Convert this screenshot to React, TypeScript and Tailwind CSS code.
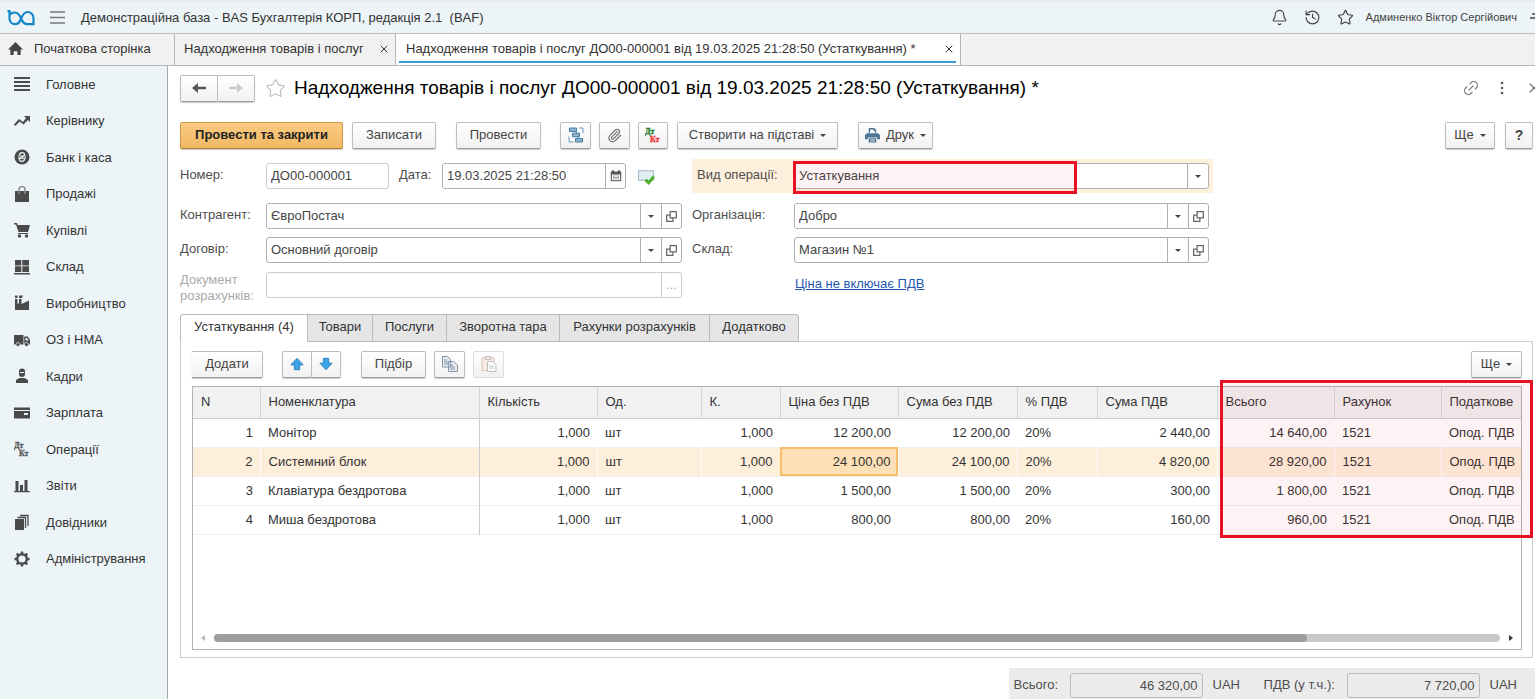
import type { ReactNode } from "react";

import clsx from "clsx";
import { Bell, History, Link2, Paperclip, Star, X } from "lucide-react";

type IconProps = { children: ReactNode; className?: string };

const Glyph = ({ children, className = "size-4" }: IconProps) => (
  <svg
    viewBox="0 0 16 16"
    fill="currentColor"
    className={clsx("shrink-0", className)}
    aria-hidden="true"
  >
    {children}
  </svg>
);

const DebitCredit = ({ debit, credit }: { debit: string; credit: string }) => (
  <Glyph className="size-4 font-['Liberation_Serif',serif] text-[8px] font-bold">
    <text x="0" y="7" fill={debit} stroke={debit} strokeWidth=".3">
      Дт
    </text>
    <text x="5" y="15" fill={credit} stroke={credit} strokeWidth=".3">
      Кт
    </text>
  </Glyph>
);

const SECTIONS = [
  {
    title: "Головне",
    icon: (
      <Glyph>
        <path d="M0 1h16v2H0zM0 5h16v2H0zM0 9h16v2H0zM0 13h16v2H0z" />
      </Glyph>
    ),
  },
  {
    title: "Керівнику",
    icon: (
      <Glyph>
        <path d="M10 3h6v6l-2-2-4.500 4.500-4-3L1.500 13 0 11.500l5-5.500 4 3 3-4z" />
      </Glyph>
    ),
  },
  {
    title: "Банк і каса",
    icon: (
      <Glyph>
        <circle cx="8" cy="8" r="7.500" />
        <path
          d="M5.500 6C5.500 3 10.500 3 10.500 5.500c0 2.500-5 2-5 5 0 2.500 5 2.500 5-.500M4 7h8M4 9.200h8"
          fill="none"
          stroke="#edf4f7"
          strokeWidth="1.200"
        />
      </Glyph>
    ),
  },
  {
    title: "Продажі",
    icon: (
      <Glyph>
        <path d="M1 5h14v11H1z" />
        <path
          d="M5 8V3.500a3 3 0 0 1 6 0V8"
          fill="none"
          stroke="#8a8d8f"
          strokeWidth="1.500"
        />
      </Glyph>
    ),
  },
  {
    title: "Купівлі",
    icon: (
      <Glyph>
        <path d="M0 1h3l.6 2H16l-2 7H4.500L2 2.500H0zM4 11h10v1H4z" />
        <circle cx="5.500" cy="14" r="1.700" />
        <circle cx="12.500" cy="14" r="1.700" />
      </Glyph>
    ),
  },
  {
    title: "Склад",
    icon: (
      <Glyph>
        <path d="M1 1h6.300v5.500H1zM8.300 1H15v5.500H8.300zM1 7.300h6.300V13H1zM8.300 7.300H15V13H8.300zM0 14h16v1.500H0z" />
      </Glyph>
    ),
  },
  {
    title: "Виробництво",
    icon: (
      <Glyph>
        <path d="M1 .5h2.500V3H1zM5 .5h4L8 3H5zM1 4h2.500v5L5 8V4h2.500v5L15 5.500V15H1z" />
      </Glyph>
    ),
  },
  {
    title: "ОЗ і НМА",
    icon: (
      <Glyph>
        <path d="M0 3h9.500v9.500H0zM10.200 4.500h3.500L16 8v4.500h-5.800zM11.500 6v2.500h3.300L13 6z" fillRule="evenodd" />
        <circle cx="4" cy="12.500" r="2" stroke="#edf4f7" strokeWidth=".7" />
        <circle cx="12.500" cy="12.500" r="2" stroke="#edf4f7" strokeWidth=".7" />
      </Glyph>
    ),
  },
  {
    title: "Кадри",
    icon: (
      <Glyph>
        <path d="M5 3.500a3 3 0 0 1 6 0V6a3 3 0 0 1-6 0zM2 15v-3l3.500-2h5l3.500 2v3z" />
        <path d="M5.800 4.500h4.400" stroke="#edf4f7" />
      </Glyph>
    ),
  },
  {
    title: "Зарплата",
    icon: (
      <Glyph>
        <path d="M0 2.500h16V5H0zM0 6h16v7.500H0zm10 2v2h4V8z" fillRule="evenodd" />
      </Glyph>
    ),
  },
  { title: "Операції", icon: <DebitCredit debit="#555" credit="#555" /> },
  {
    title: "Звіти",
    icon: (
      <Glyph>
        <path d="M1.500 3h3v10h-3zM6 7h3v6H6zM10.500 2h3v11h-3zM0 13h16v1.200H0z" />
      </Glyph>
    ),
  },
  {
    title: "Довідники",
    icon: (
      <Glyph>
        <path d="M1 5h9v11H1z" />
        <path
          d="M3.500 3.500h8V14M6 1.500h8V12"
          fill="none"
          stroke="currentColor"
          strokeWidth="1.300"
        />
      </Glyph>
    ),
  },
  {
    title: "Адміністрування",
    icon: (
      <Glyph>
        <circle
          cx="8"
          cy="8"
          r="4.800"
          fill="none"
          stroke="currentColor"
          strokeWidth="2.400"
        />
        <path
          d="M8 .5v3M8 12.500v3M.5 8h3M12.500 8h3M2.700 2.700l2 2M11.300 11.300l2 2M13.300 2.700l-2 2M4.700 11.300l-2 2"
          stroke="currentColor"
          strokeWidth="2.400"
        />
      </Glyph>
    ),
  },
];

const FORM_TABS = [
  { title: "Устаткування (4)", width: "w-[128px]" },
  { title: "Товари", width: "w-[65px]" },
  { title: "Послуги", width: "w-[74px]" },
  { title: "Зворотна тара", width: "w-[113px]" },
  { title: "Рахунки розрахунків", width: "w-[150px]" },
  { title: "Додатково", width: "w-[89px]" },
];

const COLUMNS = [
  { title: "N", width: "w-[67px]", numeric: true },
  { title: "Номенклатура", width: "" },
  { title: "Кількість", width: "w-[118px]", numeric: true },
  { title: "Од.", width: "w-[104px]" },
  { title: "К.", width: "w-[79px]", numeric: true },
  { title: "Ціна без ПДВ", width: "w-[118px]", numeric: true },
  { title: "Сума без ПДВ", width: "w-[119px]", numeric: true },
  { title: "% ПДВ", width: "w-[80px]" },
  { title: "Сума ПДВ", width: "w-[120px]", numeric: true },
  { title: "Всього", width: "w-[117px]", numeric: true },
  { title: "Рахунок", width: "w-[107px]" },
  { title: "Податкове", width: "w-[80px]" },
];

const ROWS = [
  ["1", "Монітор", "1,000", "шт", "1,000", "12 200,00", "12 200,00", "20%", "2 440,00", "14 640,00", "1521", "Опод. ПДВ"],
  ["2", "Системний блок", "1,000", "шт", "1,000", "24 100,00", "24 100,00", "20%", "4 820,00", "28 920,00", "1521", "Опод. ПДВ"],
  ["3", "Клавіатура бездротова", "1,000", "шт", "1,000", "1 500,00", "1 500,00", "20%", "300,00", "1 800,00", "1521", "Опод. ПДВ"],
  ["4", "Миша бездротова", "1,000", "шт", "1,000", "800,00", "800,00", "20%", "160,00", "960,00", "1521", "Опод. ПДВ"],
];

const SELECTED_ROW = 1;
const SELECTED_CELL = 5;

const Caret = () => (
  <span className="border-x-[3px] border-t-[3px] border-x-transparent border-t-[#444]" />
);

type ToolButtonProps = {
  children: ReactNode;
  className?: string;
  label?: string;
  disabled?: boolean;
  primary?: boolean;
};

const ToolButton = ({
  children,
  className,
  label,
  disabled,
  primary,
}: ToolButtonProps) => (
  <button
    aria-label={label}
    disabled={disabled}
    className={clsx(
      "flex h-[27px] shrink-0 items-center justify-center rounded-xs border bg-linear-to-b pb-px shadow-[0_1px_1px_#ccc] disabled:border-[#ddd] disabled:shadow-none",
      primary
        ? "border-[#c99a4c] border-b-[#a87c34] from-[#fbcb80] to-[#f1b863] font-bold text-[#222]"
        : "border-[#bdbdbd] border-b-[#9d9d9d] from-white to-[#f1f1f1]",
      className,
    )}
  >
    {children}
  </button>
);

const OpenIcon = () => (
  <Glyph className="size-[11px]">
    <path
      d="M6 1h9v9H6zM5 6H1v9h9v-4"
      fill="none"
      stroke="currentColor"
      strokeWidth="1.800"
    />
  </Glyph>
);

type ComboProps = { id: string; value: string; openable?: boolean };

const Combo = ({ id, value, openable = true }: ComboProps) => (
  <div className="flex h-[26px] flex-1 rounded-[3px] border border-[#b0b0b0] bg-white">
    <div className="relative flex flex-1">
      <select
        id={id}
        className="w-full appearance-none pr-6 pb-px pl-1 text-[#444] outline-none"
      >
        <option>{value}</option>
      </select>
      <span className="pointer-events-none absolute inset-y-0 right-0 flex w-[21px] items-center justify-center border-l border-[#b0b0b0]">
        <Caret />
      </span>
    </div>
    {openable && (
      <button
        type="button"
        aria-label="Відкрити"
        className="flex w-5 items-center justify-center border-l border-[#b0b0b0] text-[#666]"
      >
        <OpenIcon />
      </button>
    )}
  </div>
);

const TopBar = () => (
  <header className="flex h-[34px] shrink-0 items-center border-t-2 border-b border-t-[#ececec] border-b-[#b9bdbf] bg-[#edf4f7] pl-[7px]">
    <svg viewBox="0 0 28 16" className="h-4 w-7" fill="none" stroke="#1487c9" strokeWidth="2.200">
      <path d="M.5 1.200h2v7c0 3.600 2.400 6 5.600 6 3 0 4.600-2 5.900-5.200C15.500 5 17 2 20.500 2c3.400 0 6 2.600 6 6v6.200h-6c-3.500 0-5-2-6.500-5.700C12.600 4.500 11 2.500 7.500 2.500c-2 0-3.500.8-4.500 2" />
    </svg>
    <button aria-label="Меню" className="ml-[15px] text-[#777]">
      <svg viewBox="0 0 15 13" className="h-[13px] w-[15px]" stroke="currentColor" strokeWidth="1.600">
        <path d="M0 1h15M0 6.500h15M0 12h15" />
      </svg>
    </button>
    <span className="ml-4 flex-1 whitespace-pre">
      Демонстраційна база - BAS Бухгалтерія КОРП, редакція 2.1  (BAF)
    </span>
    <div className="flex items-center text-[#444]">
      <button aria-label="Сповіщення">
        <Bell className="size-[17px]" strokeWidth={1.6} />
      </button>
      <button aria-label="Історія" className="ml-4">
        <History className="size-[17px]" strokeWidth={1.6} />
      </button>
      <button aria-label="Обране" className="ml-4">
        <Star className="size-[17px]" strokeWidth={1.6} />
      </button>
      <span className="ml-3 text-[11px]">Админенко Віктор Сергійович</span>
      <button aria-label="Налаштування" className="ml-[13px] w-[5px] overflow-hidden">
        <svg viewBox="0 0 15 10" className="h-[10px] w-[15px]" stroke="currentColor" strokeWidth="1.400">
          <path d="M2 1h13M0 5h15M5 9h10" />
        </svg>
      </button>
    </div>
  </header>
);

const WindowTabs = () => (
  <nav className="flex h-8 shrink-0 border-b border-[#b5b5b5] bg-[#f1f1f1]">
    <button className="flex w-[175px] items-center border-r border-[#b5b5b5] pb-0.5 pl-2">
      <Glyph className="size-[15px] text-[#444]">
        <path d="M8 1 0 9h2.500v6H6v-4h4v4h3.500V9H16z" />
      </Glyph>
      <span className="ml-[11px]">Початкова сторінка</span>
    </button>
    <div className="flex w-[221px] items-center justify-between border-r border-[#b5b5b5] pr-[5px] pb-0.5 pl-[9px]">
      <button>Надходження товарів і послуг</button>
      <button aria-label="Закрити">
        <X className="size-3" />
      </button>
    </div>
    <div className="relative flex w-[565px] items-center justify-between border-r border-[#b5b5b5] bg-white pr-[5px] pb-0.5 pl-[10px]">
      <button>
        Надходження товарів і послуг ДО00-000001 від 19.03.2025 21:28:50 (Устаткування) *
      </button>
      <button aria-label="Закрити">
        <X className="size-3" />
      </button>
      <span className="absolute right-1 bottom-[2px] left-[3px] h-[2px] bg-[#3a9ad5]" />
    </div>
  </nav>
);

const Sidebar = () => (
  <aside className="w-[168px] shrink-0 border-r border-[#a5a9ab] bg-[#edf4f7]">
    <nav className="flex h-[511px] flex-col">
      {SECTIONS.map(({ title, icon }) => (
        <a key={title} href="#" className="flex flex-1 items-center pl-[14px]">
          <span className="flex w-8 text-[#4a4a4a]">{icon}</span>
          {title}
        </a>
      ))}
    </nav>
  </aside>
);

const TitleRow = () => (
  <div className="flex h-[26px] items-center">
    <ToolButton label="Назад" className="w-[38px] rounded-r-none">
      <Glyph className="size-4 text-[#555]">
        <path d="M1 8l6-5v3.700h8v2.600H7V13z" />
      </Glyph>
    </ToolButton>
    <ToolButton label="Вперед" className="w-[37px] rounded-l-none border-l-0">
      <Glyph className="size-4 text-[#ccc]">
        <path d="M15 8 9 3v3.700H1v2.600h8V13z" />
      </Glyph>
    </ToolButton>
    <button aria-label="Додати в обране" className="ml-[10px]">
      <Star className="size-[21px] text-[#bbb]" strokeWidth={1.2} />
    </button>
    <h1 className="ml-2 flex-1 text-[19px] whitespace-nowrap text-black">
      Надходження товарів і послуг ДО00-000001 від 19.03.2025 21:28:50 (Устаткування) *
    </h1>
    <button aria-label="Посилання">
      <Link2 className="size-[18px] -rotate-45 text-[#777]" strokeWidth={1.6} />
    </button>
    <button aria-label="Більше" className="ml-[14px] text-[#555]">
      <Glyph>
        <circle cx="8" cy="3" r="1.300" />
        <circle cx="8" cy="8" r="1.300" />
        <circle cx="8" cy="13" r="1.300" />
      </Glyph>
    </button>
    <button aria-label="Закрити" className="ml-4 flex w-[9px] overflow-hidden">
      <X className="size-4 shrink-0 text-[#666]" strokeWidth={1.6} />
    </button>
  </div>
);

const Toolbar = () => (
  <div className="mt-[21px] flex items-center pr-[2px] text-[#444]">
    <ToolButton primary className="w-[163px]">
      Провести та закрити
    </ToolButton>
    <ToolButton className="ml-[9px] w-[84px]">Записати</ToolButton>
    <ToolButton className="ml-5 w-[85px]">Провести</ToolButton>
    <ToolButton label="Структура підпорядкованості" className="ml-[19px] w-[31px]">
      <Glyph>
        <path
          d="M1.500 1h7v3.500h-7zM4.500 6.200h7v3.500h-7zM7.500 11.500h7V15h-7z"
          fill="#8fb3cf"
          stroke="#467ba4"
        />
        <path
          d="M11 1h4v5M1 9.500V15h4.500M8.500 4.500v1.700M10 9.700v1.800"
          fill="none"
          stroke="#6a9abf"
        />
      </Glyph>
    </ToolButton>
    <ToolButton label="Файли" className="ml-2 w-[31px]">
      <Paperclip className="size-[15px] text-[#777]" strokeWidth={2} />
    </ToolButton>
    <ToolButton label="Проводки" className="ml-2 w-[30px]">
      <DebitCredit debit="#1c7c1c" credit="#e33" />
    </ToolButton>
    <ToolButton className="ml-[9px] w-[161px] gap-1.5">
      Створити на підставі <Caret />
    </ToolButton>
    <ToolButton className="ml-5 w-[75px] gap-1.5">
      <Glyph className="size-[15px] text-[#4d7594]">
        <path d="M4 0h6l2 2v3h-1.500V3H9V1.500H5.500V5H4zM2 5.500h12l2 2V12h-3v-2H3v2H0V7.500zM4 11h8v4.500H4z" />
        <path d="M5.500 12.500h5M5.500 14h5" stroke="#fff" strokeWidth=".7" />
      </Glyph>
      Друк <Caret />
    </ToolButton>
    <ToolButton className="ml-auto w-[50px] gap-1.5">
      Ще <Caret />
    </ToolButton>
    <ToolButton className="ml-[10px] w-7 text-sm font-bold">?</ToolButton>
  </div>
);

const DocumentForm = () => (
  <form className="mt-[10px] grid grid-cols-[502px_521px] gap-x-[10px] text-[#4d4d4d]">
    <div className="mb-1.5 flex h-[34px] items-center">
      <label htmlFor="number" className="w-[86px] pb-0.5">
        Номер:
      </label>
      <input
        id="number"
        defaultValue="ДО00-000001"
        className="h-[26px] w-[123px] rounded-[3px] border border-[#ccc] px-1 pb-0.5 text-[#444]"
      />
      <label htmlFor="date" className="ml-[10px] w-[43px] pb-0.5">
        Дата:
      </label>
      <div className="flex h-[26px] w-[184px] rounded-[3px] border border-[#b0b0b0]">
        <input
          id="date"
          defaultValue="19.03.2025 21:28:50"
          className="min-w-0 flex-1 px-1 pb-px text-[#444] outline-none"
        />
        <button
          type="button"
          aria-label="Календар"
          className="flex w-5 items-center justify-center border-l border-[#b0b0b0] text-[#555]"
        >
          <Glyph className="size-3">
            <path
              d="M1 2h2V0h2v2h6V0h2v2h2v13H1zM2.500 6v7.500h11V6z"
              fillRule="evenodd"
            />
            <path d="M4 8h8M4 10h8M4 12h8" stroke="currentColor" strokeDasharray="2 1" />
          </Glyph>
        </button>
      </div>
      <Glyph className="ml-3 size-[17px]">
        <path d="M.5 2.500h14v9H.5z" fill="#e3edf4" stroke="#a4b8c6" />
        <path d="m7 11 3 3 5-6" fill="none" stroke="#4caf2c" strokeWidth="2.800" />
      </Glyph>
    </div>
    <div className="mb-1.5 flex h-[34px] items-center bg-[#fef0dc] pr-1 pl-[5px]">
      <label htmlFor="operation" className="w-[97px] pb-0.5">
        Вид операції:
      </label>
      <div className="relative flex flex-1">
        <Combo id="operation" value="Устаткування" openable={false} />
        <span className="pointer-events-none absolute -top-[2px] -left-px h-[33px] w-[284px] border-[3px] border-[#e81123] bg-[#e81123]/5" />
      </div>
    </div>

    <div className="flex h-[34px] items-center">
      <label htmlFor="partner" className="w-[86px] pb-0.5">
        Контрагент:
      </label>
      <Combo id="partner" value="ЄвроПостач" />
    </div>
    <div className="flex h-[34px] items-center pr-1">
      <label htmlFor="organization" className="w-[102px] pb-0.5">
        Організація:
      </label>
      <Combo id="organization" value="Добро" />
    </div>

    <div className="flex h-[34px] items-center">
      <label htmlFor="contract" className="w-[86px] pb-0.5">
        Договір:
      </label>
      <Combo id="contract" value="Основний договір" />
    </div>
    <div className="flex h-[34px] items-center pr-1">
      <label htmlFor="warehouse" className="w-[102px] pb-0.5">
        Склад:
      </label>
      <Combo id="warehouse" value="Магазин №1" />
    </div>

    <div className="flex pt-[5px]">
      <label htmlFor="settlement" className="w-[86px] leading-4 text-[#aaa]">
        Документ розрахунків:
      </label>
      <div className="flex h-[26px] flex-1 rounded-[3px] border border-[#ccc]">
        <input id="settlement" disabled className="min-w-0 flex-1 px-1" />
        <button
          type="button"
          disabled
          aria-label="Вибрати"
          className="w-5 border-l border-[#ccc] text-[#aaa]"
        >
          ...
        </button>
      </div>
    </div>
    <div className="flex h-[34px] items-center pl-[103px]">
      <a href="#" className="text-[#1f56b0] underline">
        Ціна не включає ПДВ
      </a>
    </div>
  </form>
);

const TableToolbar = () => (
  <div className="flex items-center text-[#444]">
    <ToolButton className="w-[71px] rounded-l-none border-l-0">Додати</ToolButton>
    <ToolButton label="Перемістити вгору" className="ml-[19px] w-[30px] rounded-r-none">
      <Glyph className="size-[14px]">
        <path d="M8 1.500 15 9h-4v5.500H5V9H1z" fill="#3ba4e6" stroke="#2878b4" />
      </Glyph>
    </ToolButton>
    <ToolButton label="Перемістити вниз" className="w-[29px] rounded-l-none border-l-0">
      <Glyph className="size-[14px]">
        <path d="M8 14.500 15 7h-4V1.500H5V7H1z" fill="#3ba4e6" stroke="#2878b4" />
      </Glyph>
    </ToolButton>
    <ToolButton className="ml-5 w-[65px]">Підбір</ToolButton>
    <ToolButton label="Копіювати" className="ml-2 w-[31px]">
      <Glyph>
        <path d="M.5.500h5l3 3V11h-8zM6.500 5.500h5l4 3.500v6.500h-9z" fill="#e6ecf1" stroke="#8496a8" />
        <path d="M2 4h3M2 6h4M2 8h4M8 9h3M8 11h5M8 13h5" stroke="#8496a8" />
      </Glyph>
    </ToolButton>
    <ToolButton label="Вставити" disabled className="ml-2 w-[31px]">
      <Glyph className="size-4 opacity-60">
        <path d="M1 2h12v12.500H1z" fill="#f7e7dc" stroke="#cf9b7c" />
        <path d="M4 .5h6v3H4z" fill="#ddd" stroke="#999" />
        <path d="M6.500 5.500h5l3.500 3v7H6.500z" fill="#fff" stroke="#999" />
        <path d="M8 10h5M8 12h5" stroke="#aaa" />
      </Glyph>
    </ToolButton>
    <ToolButton className="ml-auto w-[51px] gap-1.5">
      Ще <Caret />
    </ToolButton>
  </div>
);

const ItemsTable = () => (
  <div className="relative mt-2 flex flex-1 flex-col border border-[#b3b3b3]">
    <table className="w-full table-fixed border-collapse text-[#333]">
      <thead>
        <tr className="h-[31px] border-b border-[#ccc] bg-[#f1f1f1]">
          {COLUMNS.map(({ title, width }) => (
            <th
              key={title}
              className={clsx(
                "border-r border-[#d6d6d6] pb-0.5 pl-2 text-left font-normal whitespace-nowrap last:border-r-0",
                width,
              )}
            >
              {title}
            </th>
          ))}
        </tr>
      </thead>
      <tbody>
        {ROWS.map((row, rowIndex) => {
          const selected = rowIndex === SELECTED_ROW;

          return (
            <tr
              key={row[0]}
              className={clsx("h-[29px] border-b border-[#eee]", selected && "bg-[#feefdb]")}
            >
              {row.map((value, i) => (
                <td
                  key={COLUMNS[i].title}
                  className={clsx(
                    "pl-2 whitespace-nowrap",
                    COLUMNS[i].numeric && "pr-[7px] text-right",
                    i === 1 && "border-r border-r-[#ccc]",
                    i !== 1 && selected && "border-r border-r-white last:border-r-0",
                    selected &&
                      i === SELECTED_CELL &&
                      "bg-[#fde0b6] outline-2 -outline-offset-2 outline-[#f7bd68]",
                  )}
                >
                  {value}
                </td>
              ))}
            </tr>
          );
        })}
      </tbody>
    </table>
    <div className="mt-auto mb-[7px] flex items-center pr-2 pl-2">
      <span className="border-y-[3px] border-r-4 border-y-transparent border-r-[#bbb]" />
      <div className="mx-[9px] h-2 flex-1 rounded-full bg-[#c9c9c9]">
        <div className="h-2 w-[85%] rounded-full bg-[#9e9e9e]" />
      </div>
      <span className="border-y-[3px] border-l-4 border-y-transparent border-l-[#333]" />
    </div>
    <span className="pointer-events-none absolute -top-[7px] -right-3 h-[158px] w-[313px] border-[3px] border-[#e81123] bg-[#e81123]/5" />
  </div>
);

const Totals = () => (
  <footer className="mt-[10px] ml-auto flex h-[31px] items-center bg-[#ebebeb] pt-[3px] pr-[18px] pl-[5px] text-[#4d4d4d]">
    <label htmlFor="total" className="w-14">
      Всього:
    </label>
    <input
      id="total"
      readOnly
      defaultValue="46 320,00"
      className="h-[25px] w-[133px] rounded-[3px] border border-[#bbb] px-1 text-right"
    />
    <span className="ml-[10px] w-[51px]">UAH</span>
    <label htmlFor="vat" className="w-[83px] whitespace-nowrap">
      ПДВ (у т.ч.):
    </label>
    <input
      id="vat"
      readOnly
      defaultValue="7 720,00"
      className="h-[25px] w-[133px] rounded-[3px] border border-[#bbb] px-1 text-right"
    />
    <span className="ml-[10px]">UAH</span>
  </footer>
);

const App = () => (
  <div className="flex min-h-screen flex-col overflow-hidden bg-white font-['Liberation_Sans',Arial,sans-serif] text-[13px] text-[#333]">
    <TopBar />
    <WindowTabs />
    <div className="flex flex-1">
      <Sidebar />
      <main className="flex min-w-0 flex-1 flex-col pt-[9px] pl-3">
        <TitleRow />
        <Toolbar />
        <DocumentForm />
        <div role="tablist" className="mt-[10px] flex">
          {FORM_TABS.map(({ title, width }, i) => (
            <button
              key={title}
              role="tab"
              aria-selected={i === 0}
              className={clsx(
                "relative z-10 h-7 border border-[#bbb] pb-0.5 whitespace-nowrap",
                width,
                i === 0 ? "rounded-tl-[3px] border-b-white bg-white" : "border-l-0 bg-[#e5e5e5]",
                i === FORM_TABS.length - 1 && "rounded-tr-[3px]",
              )}
            >
              {title}
            </button>
          ))}
        </div>
        <section className="-mt-px mr-[2px] flex flex-1 flex-col border border-[#ccc] pt-[9px] pr-[10px] pb-[7px] pl-[11px]">
          <TableToolbar />
          <ItemsTable />
        </section>
        <Totals />
      </main>
    </div>
  </div>
);

export default App;
